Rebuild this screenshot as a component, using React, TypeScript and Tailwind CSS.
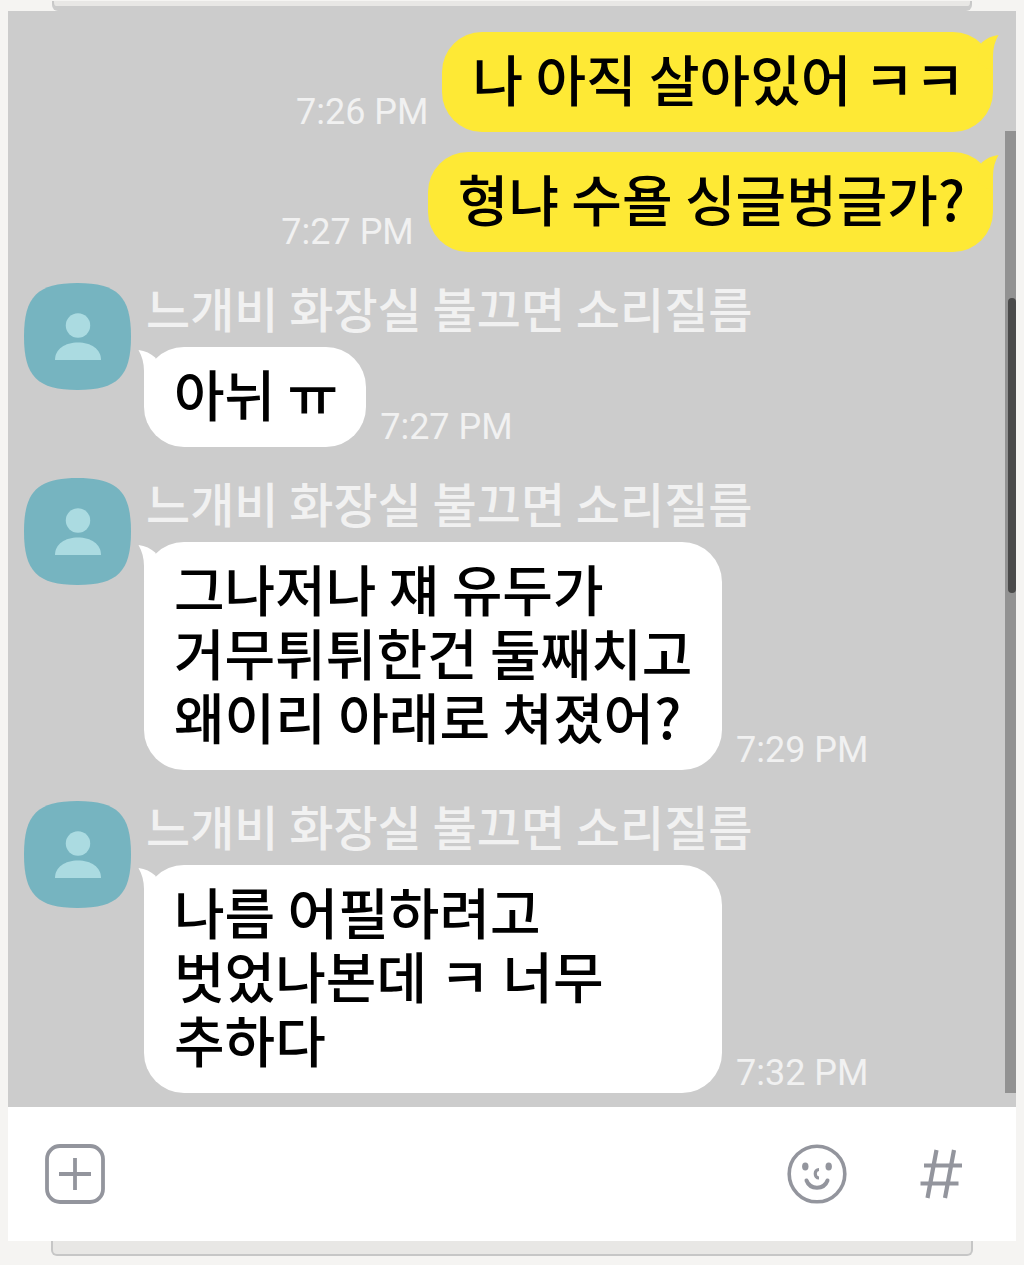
import { useState } from 'react';
import clsx from 'clsx';

type Message = {
  id: number;
  mine: boolean;
  text: string;
  time: string;
};

const FRIEND_NAME = '느개비 화장실 불끄면 소리질름';

const messages: Message[] = [
  { id: 1, mine: true, text: '나 아직 살아있어 ㅋㅋ', time: '7:26 PM' },
  { id: 2, mine: true, text: '형냐 수욜 싱글벙글가?', time: '7:27 PM' },
  { id: 3, mine: false, text: '아뉘 ㅠ', time: '7:27 PM' },
  {
    id: 4,
    mine: false,
    text: '그나저나 쟤 유두가 거무튀튀한건 둘째치고 왜이리 아래로 쳐졌어?',
    time: '7:29 PM',
  },
  {
    id: 5,
    mine: false,
    text: '나름 어필하려고 벗었나본데 ㅋ 너무 추하다',
    time: '7:32 PM',
  },
];

function Avatar() {
  return (
    <svg viewBox="0 0 107 107" className="w-[107px] h-[107px] shrink-0" aria-hidden="true">
      <path
        d="M0 53.5C0 13.5 13.5 0 53.5 0S107 13.5 107 53.5 93.5 107 53.5 107 0 93.5 0 53.5Z"
        fill="#76b4c0"
      />
      <circle cx="54" cy="42.5" r="12.2" fill="#abdbe1" />
      <path d="M31 77C31 66 41 59.5 54 59.5S77 66 77 77Z" fill="#abdbe1" />
    </svg>
  );
}

function Bubble({ mine, text }: { mine: boolean; text: string }) {
  return (
    <div
      className={clsx(
        'relative max-w-[578px] rounded-[40px] pl-[30px] pr-[28px] pt-[13px] pb-[23px] font-medium text-[55px] leading-[64px] text-black break-keep',
        mine ? 'bg-[#fee935]' : 'bg-white',
      )}
    >
      <svg
        viewBox="0 0 26 40"
        className={clsx(
          'absolute top-0 w-[26px] h-10',
          mine ? '-right-1.5 text-[#fee935]' : '-left-1.5 -scale-x-100 text-white',
        )}
        aria-hidden="true"
      >
        <path d="M8.5 10.8C13 6.5 19 3.8 25.5 3C22 9 20 16 20 24V40L4 30Z" fill="currentColor" />
      </svg>
      <p>{text}</p>
    </div>
  );
}

function Time({ value }: { value: string }) {
  return (
    <time className="font-['Roboto'] text-[36px] leading-[40px] text-[#f1f1f1] whitespace-nowrap">
      {value}
    </time>
  );
}

function MessageRow({ message }: { message: Message }) {
  if (message.mine) {
    return (
      <li className="flex items-end justify-end gap-3.5 pr-3 mb-5">
        <Time value={message.time} />
        <Bubble mine text={message.text} />
      </li>
    );
  }

  return (
    <li className="flex items-start gap-[13px] pl-4 mt-[31px]">
      <Avatar />
      <div>
        <h2 className="h-16 pl-0.5 font-medium text-[48px] leading-[48px] text-[#f1f1f1] whitespace-nowrap">
          {FRIEND_NAME}
        </h2>
        <div className="flex items-end gap-3.5">
          <Bubble mine={false} text={message.text} />
          <Time value={message.time} />
        </div>
      </div>
    </li>
  );
}

function InputBar() {
  const [text, setText] = useState('');

  return (
    <form
      className="flex items-center h-[134px] bg-white pl-9 pr-[54px] text-[#93959d]"
      onSubmit={(e) => e.preventDefault()}
    >
      <button type="button" aria-label="Add attachment">
        <svg viewBox="0 0 62 62" className="w-[62px] h-[62px]" fill="none" stroke="currentColor">
          <rect x="3" y="3" width="56" height="56" rx="13" strokeWidth="3.8" />
          <path d="M15 31H47M31 15V47" strokeWidth="3.8" />
        </svg>
      </button>
      <input
        type="text"
        aria-label="Message"
        value={text}
        onChange={(e) => setText(e.target.value)}
        className="flex-1 min-w-0 h-20 px-6 text-[40px] text-black outline-none"
      />
      <button type="button" aria-label="Emoticons" className="mr-[73px]">
        <svg viewBox="0 0 60 60" className="w-[60px] h-[60px]" fill="none" stroke="currentColor">
          <circle cx="30" cy="30" r="27.8" strokeWidth="3.6" />
          <ellipse cx="18.3" cy="22.5" rx="3.2" ry="4" fill="currentColor" stroke="none" />
          <ellipse cx="41.7" cy="22.5" rx="3.2" ry="4" fill="currentColor" stroke="none" />
          <path d="M32 25.5C27 25.5 27 34 32 34" strokeWidth="3.2" />
          <path
            d="M19.5 36.5C23 46 37 46 40.5 36.5"
            strokeWidth="4"
            strokeLinecap="round"
          />
        </svg>
      </button>
      <button type="button" aria-label="Hashtag search">
        <svg viewBox="0 0 42 50" className="w-[42px] h-[50px]" fill="none" stroke="currentColor">
          <path d="M16.5 1L7.5 49M34 1L25 49M4 16.5H42M0.5 34.5H38.5" strokeWidth="4.2" />
        </svg>
      </button>
    </form>
  );
}

export default function App() {
  return (
    <div className="min-h-screen bg-[#f5f4f2] px-2 pt-px font-['Noto_Sans_CJK_KR',sans-serif]">
      <div className="mx-11 h-[10px] rounded-b-md bg-[#cccccc]">
        <div className="h-[5px] border-x-2 border-[#c8c8c8] rounded-b-sm bg-[#e8e7e5]" />
      </div>

      <main>
        <div className="flex bg-[#cccccc]">
          <ul className="flex-1 pt-[21px] pb-3.5">
            {messages.map((message) => (
              <MessageRow key={message.id} message={message} />
            ))}
          </ul>
          <div className="w-[11px] mt-[120px] mb-3.5 pl-[3px] pt-[167px] bg-[#929292]">
            <div className="h-[295px] rounded-full bg-[#4a4a4a]" />
          </div>
        </div>
        <InputBar />
      </main>

      <div className="mx-[43px] h-[15px] border-2 border-t-0 border-[#c6c6c6] rounded-b-md bg-[#e8e7e5]" />
    </div>
  );
}
